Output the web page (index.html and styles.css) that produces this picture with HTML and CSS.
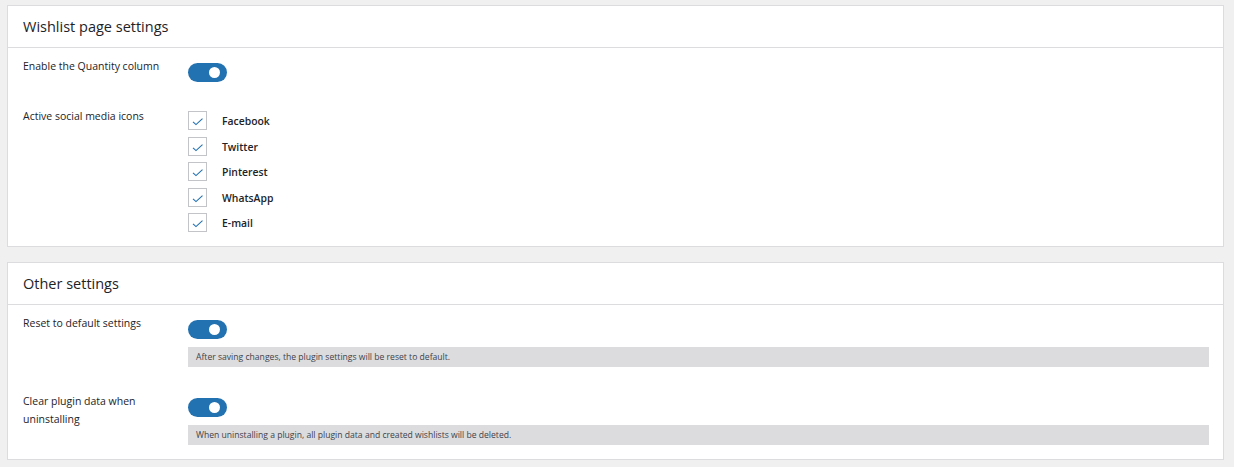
FILE: index.html
```html
<!DOCTYPE html>
<html lang="en">
<head>
<meta charset="utf-8">
<title>Wishlist settings</title>
<link rel="stylesheet" href="styles.css">
</head>
<body>
<div class="page">
  <section class="card">
    <h2 class="card-title">Wishlist page settings</h2>
    <div class="card-body">
      <div class="row">
        <div class="label">Enable the Quantity column</div>
        <div class="control">
          <span class="toggle"><span class="knob"></span></span>
        </div>
      </div>
      <div class="row row-next">
        <div class="label">Active social media icons</div>
        <div class="control">
          <ul class="checks">
            <li class="check"><span class="box"><svg viewBox="0 0 19 19" width="19" height="19"><path d="M5 10.8 L8 13.6 L14.5 7.6" fill="none" stroke="#2271b1" stroke-width="1.1"/></svg></span><span class="check-label">Facebook</span></li>
            <li class="check"><span class="box"><svg viewBox="0 0 19 19" width="19" height="19"><path d="M5 10.8 L8 13.6 L14.5 7.6" fill="none" stroke="#2271b1" stroke-width="1.1"/></svg></span><span class="check-label">Twitter</span></li>
            <li class="check"><span class="box"><svg viewBox="0 0 19 19" width="19" height="19"><path d="M5 10.8 L8 13.6 L14.5 7.6" fill="none" stroke="#2271b1" stroke-width="1.1"/></svg></span><span class="check-label">Pinterest</span></li>
            <li class="check"><span class="box"><svg viewBox="0 0 19 19" width="19" height="19"><path d="M5 10.8 L8 13.6 L14.5 7.6" fill="none" stroke="#2271b1" stroke-width="1.1"/></svg></span><span class="check-label">WhatsApp</span></li>
            <li class="check"><span class="box"><svg viewBox="0 0 19 19" width="19" height="19"><path d="M5 10.8 L8 13.6 L14.5 7.6" fill="none" stroke="#2271b1" stroke-width="1.1"/></svg></span><span class="check-label">E-mail</span></li>
          </ul>
        </div>
      </div>
    </div>
  </section>

  <section class="card">
    <h2 class="card-title">Other settings</h2>
    <div class="card-body">
      <div class="row">
        <div class="label">Reset to default settings</div>
        <div class="control">
          <span class="toggle"><span class="knob"></span></span>
          <p class="desc">After saving changes, the plugin settings will be reset to default.</p>
        </div>
      </div>
      <div class="row row-next">
        <div class="label">Clear plugin data when uninstalling</div>
        <div class="control">
          <span class="toggle"><span class="knob"></span></span>
          <p class="desc">When uninstalling a plugin, all plugin data and created wishlists will be deleted.</p>
        </div>
      </div>
    </div>
  </section>
</div>
</body>
</html>
```

FILE: styles.css
```css
* { box-sizing: border-box; }

html, body {
  margin: 0;
  padding: 0;
  background: #f0f0f0;
}

body {
  font-family: "Open Sans", "Noto Sans", "Liberation Sans", sans-serif;
  color: #1d2327;
  font-size: 10.5px;
}

.page {
  padding: 5px 10px 0 7px;
  display: flex;
  flex-direction: column;
  gap: 15px;
}

.card {
  background: #fff;
  border: 1px solid #dcdcde;
}

.card-title {
  margin: 0;
  height: 42px;
  padding: 0 15px;
  display: flex;
  align-items: center;
  font-size: 14.5px;
  font-weight: 400;
  color: #1d2327;
  border-bottom: 1px solid #dcdcde;
}

.card-body {
  padding: 9px 14px 14px 15px;
}

.row {
  display: flex;
  align-items: flex-start;
}

.row-next {
  margin-top: 25px;
}

.label {
  width: 165px;
  flex: none;
  padding-right: 20px;
  line-height: 18px;
}

.control {
  flex: 1;
  padding-top: 6px;
}

.toggle {
  display: block;
  width: 39px;
  height: 19px;
  border-radius: 10px;
  background: #2271b1;
  position: relative;
}

.knob {
  position: absolute;
  right: 7px;
  top: 4px;
  width: 11px;
  height: 11px;
  border-radius: 50%;
  background: #fff;
}

.desc {
  margin: 8px 0 0;
  height: 20px;
  background: #dcdcde;
  padding: 0 8px;
  font-size: 8.6px;
  line-height: 20px;
  color: #3c434a;
}

.checks {
  list-style: none;
  margin: -2px 0 0;
  padding: 0;
  display: flex;
  flex-direction: column;
  gap: 6.5px;
}

.check {
  display: flex;
  align-items: center;
  height: 19px;
}

.box {
  width: 19px;
  height: 19px;
  border: 1px solid #c3c4c7;
  flex: none;
  position: relative;
}

.box svg {
  display: block;
  position: absolute;
  left: -1px;
  top: -1px;
}

.check-label {
  margin-left: 15px;
  font-weight: 600;
  font-size: 10.4px;
  padding-top: 1px;
}
```
